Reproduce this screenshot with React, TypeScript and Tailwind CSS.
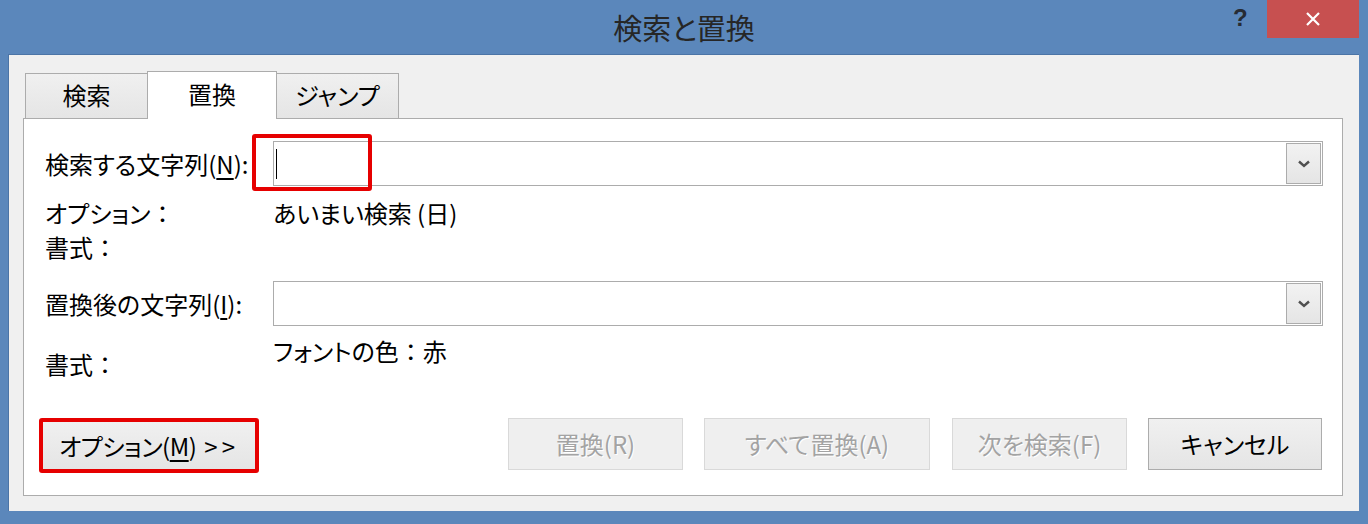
import React from "react";

function Chevron() {
  return (
    <svg width="12" height="8" viewBox="0 0 12 8" aria-hidden>
      <path d="M1 1.5 L6 6 L11 1.5" fill="none" stroke="#505050" strokeWidth="2.4" />
    </svg>
  );
}

// full-width colon, kept at full width even with proportional kana
function Colon() {
  return <span className="[font-feature-settings:normal]">：</span>;
}

function ComboBox({ caret }: { caret?: boolean }) {
  return (
    <div className="flex h-[45px] items-center border border-[#acacac] bg-white pr-px">
      <div className="flex flex-1 items-center pl-[2px]">
        {caret && <span className="block h-[30px] w-px bg-black" />}
      </div>
      <div className="flex h-[41px] w-[35px] items-center justify-center border border-[#acacac] bg-gradient-to-b from-[#f2f2f2] to-[#e5e5e5]">
        <Chevron />
      </div>
    </div>
  );
}

function Btn({
  children,
  disabled,
  className = "",
}: {
  children: React.ReactNode;
  disabled?: boolean;
  className?: string;
}) {
  return (
    <div
      className={
        "flex h-[52px] items-center justify-center border text-[24px] " +
        (disabled
          ? "border-[#d9d9d9] bg-[#efefef] text-[#a3a3a3] [text-shadow:1px_1px_0_#fff] "
          : "border-[#acacac] bg-gradient-to-b from-[#f0f0f0] to-[#e5e5e5] text-black ") +
        className
      }
    >
      {children}
    </div>
  );
}

export default function App() {
  return (
    <div className="flex h-[524px] w-[1368px] flex-col bg-[#5b87bb] font-['Noto_Sans_CJK_JP',sans-serif] [font-feature-settings:'palt'] text-black">
      {/* title bar */}
      <div className="relative flex h-[54px] items-center justify-center">
        <span className="text-[29px] leading-none text-[#262626]">検索と置換</span>
        <span className="absolute left-[1233px] top-[4px] font-['Liberation_Sans',sans-serif] text-[24px] font-bold leading-[28px] text-[#262b33]">
          ?
        </span>
        <div className="absolute left-[1267px] top-0 flex h-[38px] w-[92px] items-center justify-center bg-[#c75050]">
          <svg width="14" height="14" viewBox="0 0 14 14" aria-hidden>
            <path d="M1 1 L13 13 M13 1 L1 13" stroke="#fff" strokeWidth="2.2" />
          </svg>
        </div>
      </div>

      {/* dialog body */}
      <div className="ml-[8px] flex h-[457px] w-[1351px] flex-col border-l border-t border-[#4b74a6] bg-[#f0f0f0] pl-[14px] pt-[16px]">
        {/* tabs */}
        <div className="relative z-10 ml-[2px] flex h-[47px] items-end text-[24px] leading-none">
          <div className="flex h-[45px] w-[123px] items-center justify-center border border-b-0 border-[#acacac] bg-gradient-to-b from-[#f0f0f0] to-[#e5e5e5] pb-[2px]">
            検索
          </div>
          <div className="-mb-px -ml-px flex h-[48px] w-[130px] items-center justify-center border border-b-0 border-[#acacac] bg-white pb-[3px]">
            置換
          </div>
          <div className="-ml-px flex h-[45px] w-[123px] items-center justify-center border border-b-0 border-[#acacac] bg-gradient-to-b from-[#f0f0f0] to-[#e5e5e5] pb-[2px]">
            ジャンプ
          </div>
        </div>

        {/* panel */}
        <div className="relative flex h-[378px] w-[1320px] flex-col border border-[#acacac] bg-white pl-[21px] pr-[19px] pt-[22px] text-[24px]">
          <div className="flex items-center">
            <div className="w-[228px] pt-px">
              検索する文字列(<span className="underline underline-offset-[4px]">N</span>):
            </div>
            <div className="flex-1">
              <ComboBox caret />
            </div>
          </div>

          <div className="mt-[10px] flex leading-[34px]">
            <div className="w-[228px]">
              オプション<Colon />
            </div>
            <div>あいまい検索 (日)</div>
          </div>
          <div className="flex leading-[34px]">
            <div className="w-[228px]">
              書式<Colon />
            </div>
          </div>

          <div className="mt-[17px] flex items-center">
            <div className="w-[228px] pt-px">
              置換後の文字列(<span className="underline underline-offset-[4px]">I</span>):
            </div>
            <div className="flex-1">
              <ComboBox />
            </div>
          </div>

          <div className="flex items-start leading-[28px]">
            <div className="mt-[24px] w-[228px]">
              書式<Colon />
            </div>
            <div className="mt-[11px]">
              フォントの色<Colon />赤
            </div>
          </div>

          {/* buttons */}
          <div className="mt-auto mb-[22px] -ml-[6px] flex items-start">
            <div className="h-[55px] w-[220px] rounded-[3px] border-[4px] border-[#e60000]">
              <Btn className="h-full border-0 text-[22px] tracking-[-0.5px]">
                オプション(<span className="underline underline-offset-[4px]">M</span>)
                <span className="ml-[8px] tracking-[4px]">&gt;&gt;</span>
              </Btn>
            </div>
            <Btn disabled className="ml-[249px] w-[175px]">置換(R)</Btn>
            <Btn disabled className="ml-[21px] w-[226px]">すべて置換(A)</Btn>
            <Btn disabled className="ml-[22px] w-[175px]">次を検索(F)</Btn>
            <Btn className="ml-[21px] w-[174px]">キャンセル</Btn>
          </div>

          {/* annotation over the search field */}
          <div className="absolute left-[228px] top-[15px] h-[57px] w-[120px] rounded-[3px] border-[4px] border-[#e60000]" />
        </div>
      </div>
    </div>
  );
}
